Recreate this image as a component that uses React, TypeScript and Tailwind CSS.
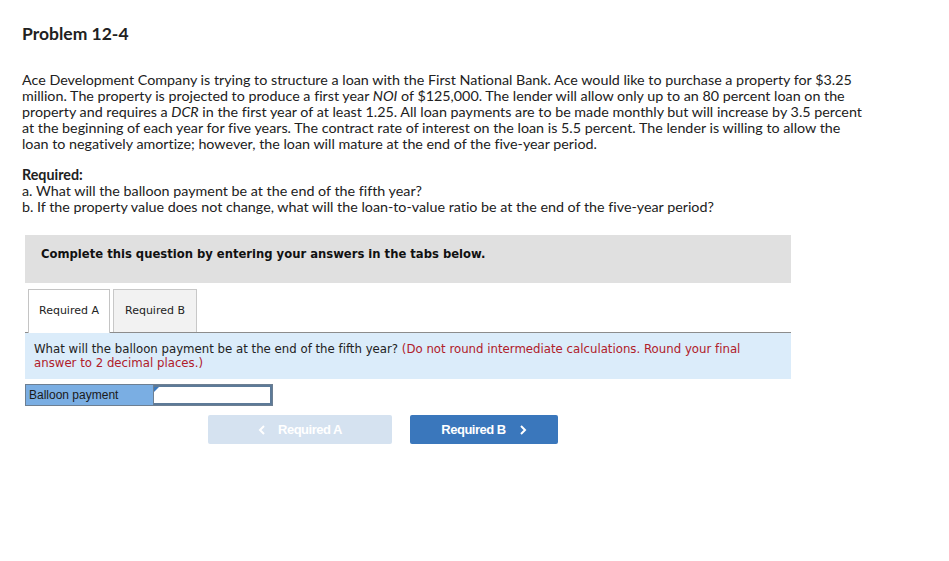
import React from "react";

const body = { fontFamily: 'Lato, "Open Sans", "Liberation Sans", sans-serif' };
const verdana = { fontFamily: '"DejaVu Sans", Verdana, sans-serif' };
const arial = { fontFamily: '"Liberation Sans", Arial, sans-serif' };

function Chevron({ left }: { left?: boolean }) {
  return (
    <svg width="8" height="10" viewBox="0 0 8 10" className="inline-block">
      <path
        d={left ? "M6 1 L2 5 L6 9" : "M2 1 L6 5 L2 9"}
        fill="none"
        stroke="currentColor"
        strokeWidth="2"
      />
    </svg>
  );
}

export default function App() {
  return (
    <div className="w-[949px] h-[561px] bg-white text-[#212121] pl-[22px] pt-[24px] [font-variant-ligatures:none]" style={body}>
      <h1 className="text-[17.5px] font-bold leading-[20px]">Problem 12-4</h1>
      <div className="mt-[28px] text-[14.3px] leading-[16px] whitespace-nowrap">
        <div>Ace Development Company is trying to structure a loan with the First National Bank. Ace would like to purchase a property for $3.25</div>
        <div>million. The property is projected to produce a first year <i>NOI</i> of $125,000. The lender will allow only up to an 80 percent loan on the</div>
        <div>property and requires a <i>DCR</i> in the first year of at least 1.25. All loan payments are to be made monthly but will increase by 3.5 percent</div>
        <div>at the beginning of each year for five years. The contract rate of interest on the loan is 5.5 percent. The lender is willing to allow the</div>
        <div>loan to negatively amortize; however, the loan will mature at the end of the five-year period.</div>
      </div>
      <div className="mt-[15px] text-[14.3px] leading-[16px] whitespace-nowrap">
        <div className="font-bold">Required:</div>
        <div>a. What will the balloon payment be at the end of the fifth year?</div>
        <div>b. If the property value does not change, what will the loan-to-value ratio be at the end of the five-year period?</div>
      </div>

      <div className="ml-[3px] w-[766px] mt-[20px]" style={verdana}>
        <div className="h-[48px] bg-[#e0e0e0] pl-[16px] pt-[11px] text-[11.6px] leading-[16px] font-bold text-[#111]">
          Complete this question by entering your answers in the tabs below.
        </div>
        <div className="mt-[6px] flex items-end gap-[3px] pl-[3px] border-b border-[#8c8c8c]">
          <div className="h-[44px] w-[82px] bg-white border border-[#c4c4c4] border-b-0 -mb-px flex items-center justify-center text-[11px] text-[#222]">
            Required A
          </div>
          <div className="h-[43px] w-[84px] bg-[#f2f2f2] border border-[#c8c8c8] border-b-0 flex items-center justify-center text-[11px] text-[#222]">
            Required B
          </div>
        </div>
        <div className="h-[46px] bg-[#dbecfa] pl-[9px] pt-[9px] text-[11.75px] leading-[14px] text-[#222]">
          What will the balloon payment be at the end of the fifth year?{" "}
          <span className="text-[#b0202a]">(Do not round intermediate calculations. Round your final</span>
          <br />
          <span className="text-[#b0202a]">answer to 2 decimal places.)</span>
        </div>
        <div className="mt-[5px] flex w-[248px] h-[22px] border border-[#6d7f92]">
          <div className="w-[128px] bg-[#7aaee3] border-r border-[#6d7f92] flex items-center pl-[3px] text-[12px] text-[#1a1a1a]" style={arial}>
            Balloon payment
          </div>
          <div className="relative flex-1 bg-white border-[2px] border-[#5d7a98] border-l-0">
            <div className="absolute left-0 top-0 w-0 h-0 border-t-[5px] border-t-[#3a78bd] border-r-[5px] border-r-transparent" />
          </div>
        </div>
        <div className="mt-[9px] flex pl-[183px] gap-[18px]" style={arial}>
          <div className="w-[184px] h-[29px] bg-[#d5e2f0] rounded-[2px] flex items-center justify-center gap-[12px] text-white text-[13px] font-bold tracking-[-0.5px]">
            <Chevron left />
            <span>Required A</span>
          </div>
          <div className="w-[148px] h-[29px] bg-[#3a77bc] rounded-[2px] flex items-center justify-center gap-[13px] text-white text-[13px] font-bold tracking-[-0.5px]">
            <span>Required B</span>
            <Chevron />
          </div>
        </div>
      </div>
    </div>
  );
}
